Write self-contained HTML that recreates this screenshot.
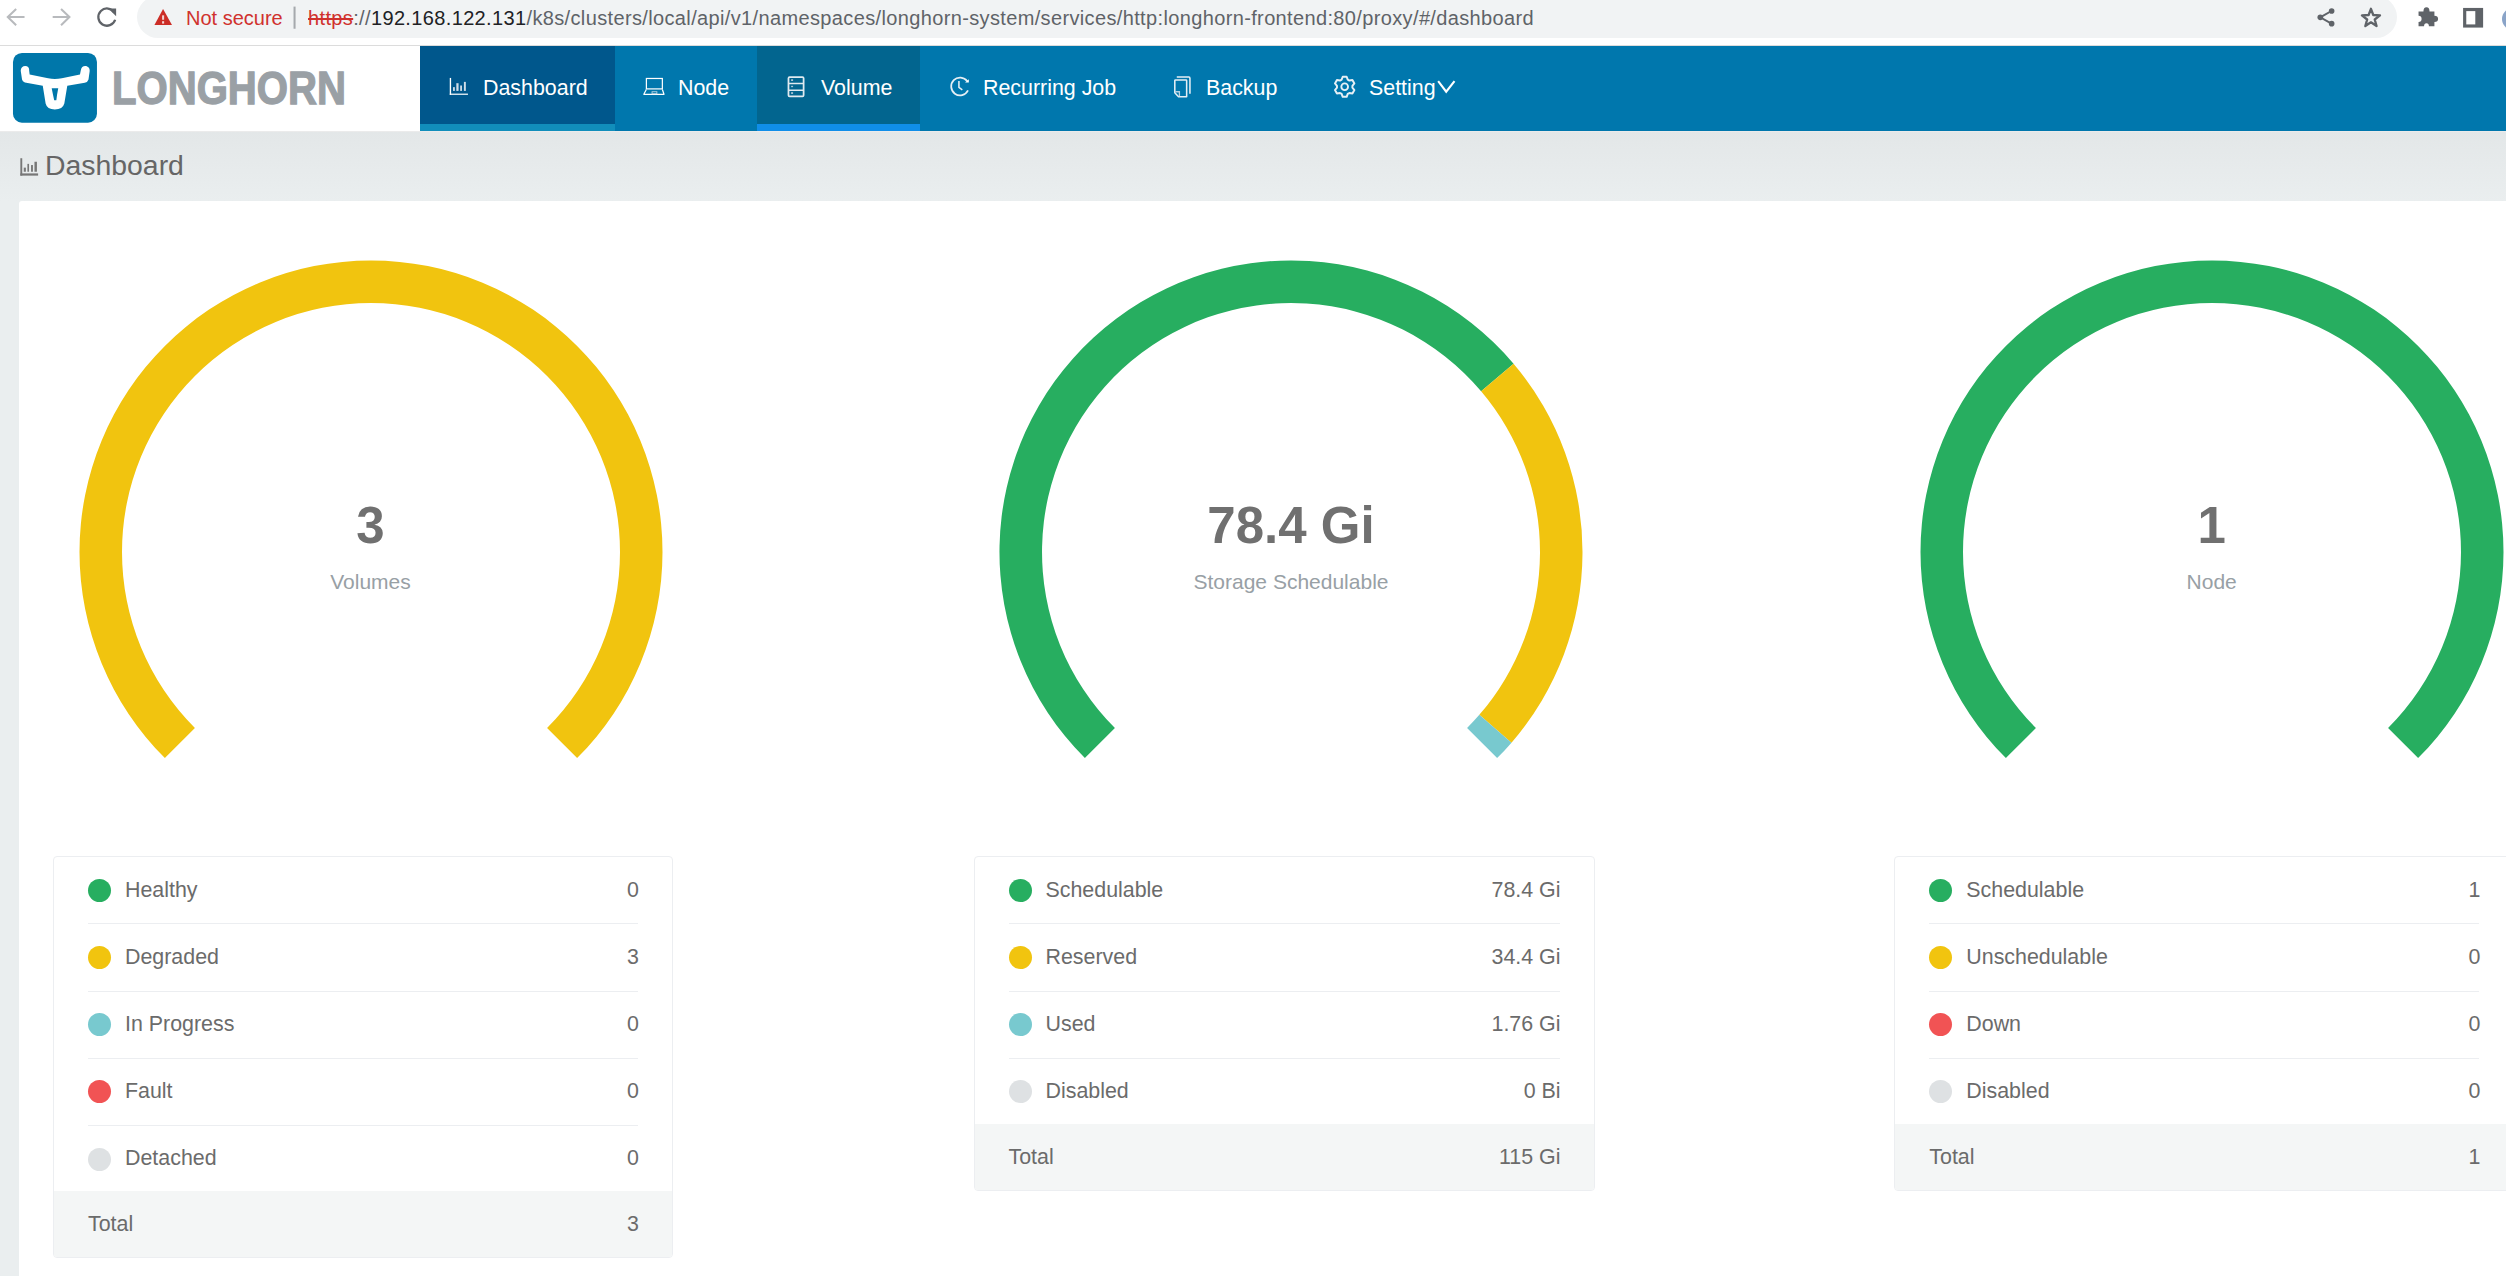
<!DOCTYPE html>
<html>
<head>
<meta charset="utf-8">
<style>
html,body{margin:0;padding:0;}
body{width:2506px;height:1276px;overflow:hidden;position:relative;background:#fff;font-family:"Liberation Sans",sans-serif;}
.abs{position:absolute;}
/* browser chrome */
#chrome{position:absolute;left:0;top:0;width:2506px;height:45px;background:#fff;}
#pill{position:absolute;left:137px;top:-4px;width:2260px;height:42px;background:#f1f3f4;border-radius:21px;}
#sep{position:absolute;left:0;top:45px;width:2506px;height:1px;background:#dcdcdc;}
.url{position:absolute;top:6px;font-size:20px;line-height:24px;white-space:nowrap;}
#urltxt{letter-spacing:0.36px;}
/* nav */
#nav{position:absolute;left:0;top:46px;width:2506px;height:85px;background:#fff;}
#navblue{position:absolute;left:420px;top:0;width:2086px;height:85px;background:#0077ad;}
.tab{position:absolute;top:0;height:85px;}
.tabtxt{position:absolute;top:29.6px;font-size:21.4px;line-height:24px;color:#fff;white-space:nowrap;}
/* content */
#graybg{position:absolute;left:0;top:131px;width:2506px;height:1145px;background:linear-gradient(#e3e7e8,#eaeeef 70px,#eaeeef);}
#card{position:absolute;left:19px;top:201px;width:2497px;height:1085px;background:#fff;border-radius:3px;}
#navline{position:absolute;left:0;top:131px;width:2506px;height:1px;background:#ebebeb;}
.gnum{position:absolute;width:400px;text-align:center;font-weight:bold;font-size:51px;line-height:56px;color:#707070;}
.gsub{position:absolute;width:400px;text-align:center;font-size:21px;line-height:24px;color:#98a0a5;}
.tbl{position:absolute;top:856px;width:620px;box-sizing:border-box;border:1px solid #eceef1;border-radius:4px;background:#fff;overflow:hidden;}
.tbl .dot{position:absolute;left:34px;width:23px;height:23px;border-radius:50%;}
.tbl .lbl{position:absolute;left:71px;font-size:21.4px;line-height:24px;color:#6b6b6b;white-space:nowrap;}
.tbl .val{position:absolute;right:33px;font-size:21.4px;line-height:24px;color:#6b6b6b;white-space:nowrap;}
.tbl .line{position:absolute;left:34px;right:34px;height:1px;background:#eceef1;}
.tbl .tot{position:absolute;left:0;right:0;bottom:0;background:#f4f6f6;}
.tbl .tot .lbl{left:34px;top:21px;}
.tbl .tot .val{top:21px;}
</style>
</head>
<body>
<div id="chrome">
  <div id="pill"></div>
  <!-- back -->
  <svg class="abs" style="left:0;top:0" width="300" height="60" viewBox="0 0 2506 501">
    <g fill="none" stroke-linecap="butt">
      <path d="M205 142 H70 M135 75 L65 142 L135 210" stroke="#b8babd" stroke-width="17"/>
      <path d="M440 142 H575 M510 75 L580 142 L510 210" stroke="#b8babd" stroke-width="17"/>
      <path d="M955 105 A72 72 0 1 0 962 165" stroke="#5f6368" stroke-width="19"/>
    </g>
    <path d="M905 70 L970 70 L970 135 Z" fill="#5f6368"/>
    <path d="M1362 76 L1437 209 L1290 209 Z" fill="#cc2d26"/>
    <rect x="1354" y="128" width="17" height="37" fill="#f3d4d2"/>
    <rect x="1354" y="177" width="17" height="20" fill="#f3d4d2"/>
    <rect x="2452" y="55" width="17" height="185" fill="#a6a9ad"/>
  </svg>
  <div class="url" style="left:186px;color:#d0312d">Not secure</div>
  <div class="url" id="urltxt" style="left:308px;color:#5f6368"><span style="color:#d0312d;text-decoration:line-through">https</span>://<span style="color:#202124">192.168.122.131</span>/k8s/clusters/local/api/v1/namespaces/longhorn-system/services/htt<span></span>p:longhorn-frontend:80/proxy/#/dashboard</div>
  <svg class="abs" style="left:2200px;top:0" width="306" height="140" viewBox="0 0 2506 1147">
    <g fill="#5f6368" stroke="#5f6368">
      <path d="M1080 88 L985 142 L1080 196" fill="none" stroke-width="16"/>
      <circle cx="1078" cy="90" r="23" stroke="none"/>
      <circle cx="985" cy="142" r="23" stroke="none"/>
      <circle cx="1078" cy="194" r="23" stroke="none"/>
      <path d="M1400 72 L1419 123 L1474 126 L1431 160 L1446 213 L1400 183 L1354 213 L1369 160 L1326 126 L1381 123 Z" fill="none" stroke-width="19" stroke-linejoin="round"/>
      <path d="M1790 95 H1830 Q1830 60 1855 60 Q1880 60 1880 95 H1920 V130 Q1950 130 1950 155 Q1950 180 1920 180 V215 H1875 Q1875 190 1855 190 Q1835 190 1835 215 H1790 V180 Q1815 180 1815 155 Q1815 130 1790 130 Z" stroke="none"/>
      <rect x="2168" y="78" width="138" height="135" fill="none" stroke-width="26"/>
      <rect x="2255" y="78" width="60" height="135" stroke="none"/>
    </g>
  </svg>
  <div class="abs" style="left:2502px;top:8px;width:22px;height:22px;border-radius:50%;background:#8aa4c8"></div>
</div>
<div id="sep"></div>
<div id="nav">
  <svg class="abs" style="left:10px;top:4px" width="90" height="76" viewBox="0 0 1511 1276">
    <rect x="50" y="50" width="1410" height="1170" rx="150" fill="#0077aa"/>
    <path fill="#fff" d="M180 350 C180 295 215 270 255 270 C300 270 328 300 322 350 L330 410 L640 475 Q750 502 870 475 L1175 410 L1188 345 C1195 295 1225 270 1262 270 C1310 270 1345 310 1337 360 L1318 495 Q1305 540 1255 550 L962 602 L912 900 Q885 1000 752 1000 Q622 1000 598 900 L550 602 L250 545 Q208 532 202 495 Z"/>
    <path fill="#0077aa" d="M700 642 L810 642 L790 750 L778 845 L742 845 L722 750 Z"/>
  </svg>
  <div id="logotxt" class="abs" style="left:112px;top:14px;font-size:46px;line-height:56px;font-weight:bold;color:#9aa0a5;-webkit-text-stroke:1.3px #9aa0a5;transform-origin:0 0;transform:scaleX(0.872);white-space:nowrap">LONGHORN</div>
  <div id="navblue"></div>
  <div class="tab" style="left:420px;width:195px;background:#00578c"><div style="position:absolute;left:0;right:0;bottom:0;height:7px;background:#118ebb"></div></div>
  <div class="tab" style="left:757px;width:163px;background:#02658f"><div style="position:absolute;left:0;right:0;bottom:0;height:7px;background:#108ee9"></div></div>
  <!-- icons -->
  <svg class="abs" style="left:444px;top:26px" width="30" height="28" viewBox="0 0 1367 1276" fill="#fff">
    <rect x="262" y="270" width="62" height="770"/>
    <rect x="262" y="985" width="830" height="55"/>
    <rect x="412" y="690" width="82" height="172" fill="#d0dde8"/>
    <rect x="562" y="510" width="102" height="352" fill="#d0dde8"/>
    <rect x="737" y="615" width="82" height="247" fill="#d0dde8"/>
    <rect x="907" y="450" width="88" height="412" fill="#d0dde8"/>
  </svg>
  <svg class="abs" style="left:638px;top:26px" width="32" height="28" viewBox="0 0 1458 1276" fill="none" stroke="#fff">
    <rect x="382" y="295" width="728" height="475" stroke-width="55"/>
    <path d="M380 800 L265 1015 L1185 1015 L1110 800" stroke-width="55" stroke-linejoin="round"/>
    <rect x="640" y="900" width="220" height="90" stroke-width="40" stroke="#c0d8e6"/>
  </svg>
  <svg class="abs" style="left:782px;top:26px" width="28" height="28" viewBox="0 0 1276 1276" fill="none" stroke="#e0eaf0">
    <rect x="295" y="230" width="690" height="880" rx="50" stroke-width="80"/>
    <path d="M295 520 H985 M295 830 H985" stroke-width="70"/>
    <g fill="#a9c4d5" stroke="none"><rect x="415" y="330" width="90" height="80"/><rect x="415" y="630" width="90" height="60"/><rect x="415" y="920" width="90" height="80"/></g>
  </svg>
  <svg class="abs" style="left:944px;top:26px" width="30" height="28" viewBox="0 0 1367 1276" fill="none" stroke="#e6eff5">
    <path d="M1095 840 A405 405 0 1 1 1060 420" stroke-width="80"/>
    <path d="M960 480 L1130 480 L1130 330 Z" fill="#fff" stroke="none"/>
    <path d="M680 410 V700 L835 810" stroke-width="70"/>
  </svg>
  <svg class="abs" style="left:1168px;top:26px" width="28" height="28" viewBox="0 0 1276 1276" fill="none" stroke="#e6eff5">
    <path d="M400 230 H950 Q1000 230 1000 280 V990" stroke-width="70"/>
    <path d="M340 360 H820 Q850 360 850 390 V1130 H480 L310 950 V390 Q310 360 340 360 Z" stroke-width="70" stroke-linejoin="round"/>
    <path d="M330 900 H520 V1110" stroke-width="60" stroke="#b8d2e2"/>
  </svg>
  <svg class="abs" style="left:1330px;top:26px" width="130" height="30" viewBox="0 0 2506 578" fill="none" stroke="#e6eff5">
    <path id="gear" stroke-width="38" stroke-linejoin="round" d="M224 147 L245 91 L321 91 L342 147 L373 165 L432 155 L470 221 L432 267 L432 303 L470 349 L432 415 L373 405 L342 423 L321 479 L245 479 L224 423 L193 405 L134 415 L96 349 L134 303 L134 267 L96 221 L134 155 L193 165 Z"/>
    <circle cx="283" cy="285" r="65" stroke-width="36"/>
    <path d="M2085 175 L2240 380 L2400 175" stroke-width="40" stroke="#fff"/>
  </svg>
  <div class="tabtxt" style="left:483px">Dashboard</div>
  <div class="tabtxt" style="left:678px">Node</div>
  <div class="tabtxt" style="left:821px">Volume</div>
  <div class="tabtxt" style="left:983px">Recurring Job</div>
  <div class="tabtxt" style="left:1206px">Backup</div>
  <div class="tabtxt" style="left:1369px">Setting</div>
</div>
<div id="graybg"></div>
<div id="navline"></div>
<div id="card"></div>
<svg class="abs" style="left:16px;top:150px" width="30" height="30" viewBox="0 0 1276 1276" fill="#777">
  <rect x="185" y="350" width="80" height="740"/>
  <rect x="185" y="995" width="755" height="95"/>
  <rect x="330" y="750" width="90" height="175"/>
  <rect x="485" y="590" width="70" height="335"/>
  <rect x="640" y="640" width="80" height="285"/>
  <rect x="785" y="500" width="105" height="425"/>
</svg>
<div class="abs" style="left:45px;top:148.6px;font-size:28.4px;line-height:32px;color:#666;white-space:nowrap">Dashboard</div>

<!-- gauges -->
<svg class="abs" style="left:70.5px;top:252px" width="600" height="600" viewBox="0 0 600 600">
  <path fill="#f1c40f" d="M93.88 506.12 A291.50 291.50 0 1 1 506.12 506.12 L476.07 476.07 A249.00 249.00 0 1 0 123.93 476.07 Z"/>
</svg>
<svg class="abs" style="left:991px;top:252px" width="600" height="600" viewBox="0 0 600 600">
  <path fill="#27ae60" d="M93.88 506.12 A291.50 291.50 0 1 1 522.57 111.76 L490.12 139.20 A249.00 249.00 0 1 0 123.93 476.07 Z"/>
  <path fill="#f1c40f" d="M522.57 111.76 A291.50 291.50 0 0 1 520.49 490.67 L488.34 462.87 A249.00 249.00 0 0 0 490.12 139.20 Z"/>
  <path fill="#78c9cf" d="M520.49 490.67 A291.50 291.50 0 0 1 506.12 506.12 L476.07 476.07 A249.00 249.00 0 0 0 488.34 462.87 Z"/>
</svg>
<svg class="abs" style="left:1911.7px;top:252px" width="600" height="600" viewBox="0 0 600 600">
  <path fill="#27ae60" d="M93.88 506.12 A291.50 291.50 0 1 1 506.12 506.12 L476.07 476.07 A249.00 249.00 0 1 0 123.93 476.07 Z"/>
</svg>

<div class="gnum" style="left:170.5px;top:498px">3</div>
<div class="gsub" style="left:170.5px;top:570px">Volumes</div>
<div class="gnum" style="left:1091px;top:498px">78.4 Gi</div>
<div class="gsub" style="left:1091px;top:570px">Storage Schedulable</div>
<div class="gnum" style="left:2011.7px;top:498px">1</div>
<div class="gsub" style="left:2011.7px;top:570px">Node</div>

<!-- tables -->
<div class="tbl" style="left:53px;height:402px">
<div class="dot" style="top:22.1px;background:#27ae60"></div><div class="lbl" style="top:21.0px">Healthy</div><div class="val" style="top:21.0px">0</div>
<div class="line" style="top:66.3px"></div>
<div class="dot" style="top:89.2px;background:#f1c40f"></div><div class="lbl" style="top:88.0px">Degraded</div><div class="val" style="top:88.0px">3</div>
<div class="line" style="top:133.6px"></div>
<div class="dot" style="top:156.3px;background:#78c9cf"></div><div class="lbl" style="top:155.0px">In Progress</div><div class="val" style="top:155.0px">0</div>
<div class="line" style="top:201.0px"></div>
<div class="dot" style="top:223.4px;background:#f15354"></div><div class="lbl" style="top:222.0px">Fault</div><div class="val" style="top:222.0px">0</div>
<div class="line" style="top:268.3px"></div>
<div class="dot" style="top:290.5px;background:#dee1e3"></div><div class="lbl" style="top:289.0px">Detached</div><div class="val" style="top:289.0px">0</div>
<div class="tot" style="top:334px"><div class="lbl">Total</div><div class="val">3</div></div>
</div>
<div class="tbl" style="left:973.5px;width:621px;height:335px">
<div class="dot" style="top:22.1px;background:#27ae60"></div><div class="lbl" style="top:21.0px">Schedulable</div><div class="val" style="top:21.0px">78.4 Gi</div>
<div class="line" style="top:66.3px"></div>
<div class="dot" style="top:89.2px;background:#f1c40f"></div><div class="lbl" style="top:88.0px">Reserved</div><div class="val" style="top:88.0px">34.4 Gi</div>
<div class="line" style="top:133.6px"></div>
<div class="dot" style="top:156.3px;background:#78c9cf"></div><div class="lbl" style="top:155.0px">Used</div><div class="val" style="top:155.0px">1.76 Gi</div>
<div class="line" style="top:201.0px"></div>
<div class="dot" style="top:223.4px;background:#dee1e3"></div><div class="lbl" style="top:222.0px">Disabled</div><div class="val" style="top:222.0px">0 Bi</div>
<div class="tot" style="top:267px"><div class="lbl">Total</div><div class="val">115 Gi</div></div>
</div>
<div class="tbl" style="left:1894.3px;height:335px">
<div class="dot" style="top:22.1px;background:#27ae60"></div><div class="lbl" style="top:21.0px">Schedulable</div><div class="val" style="top:21.0px">1</div>
<div class="line" style="top:66.3px"></div>
<div class="dot" style="top:89.2px;background:#f1c40f"></div><div class="lbl" style="top:88.0px">Unschedulable</div><div class="val" style="top:88.0px">0</div>
<div class="line" style="top:133.6px"></div>
<div class="dot" style="top:156.3px;background:#f15354"></div><div class="lbl" style="top:155.0px">Down</div><div class="val" style="top:155.0px">0</div>
<div class="line" style="top:201.0px"></div>
<div class="dot" style="top:223.4px;background:#dee1e3"></div><div class="lbl" style="top:222.0px">Disabled</div><div class="val" style="top:222.0px">0</div>
<div class="tot" style="top:267px"><div class="lbl">Total</div><div class="val">1</div></div>
</div>
</body>
</html>
